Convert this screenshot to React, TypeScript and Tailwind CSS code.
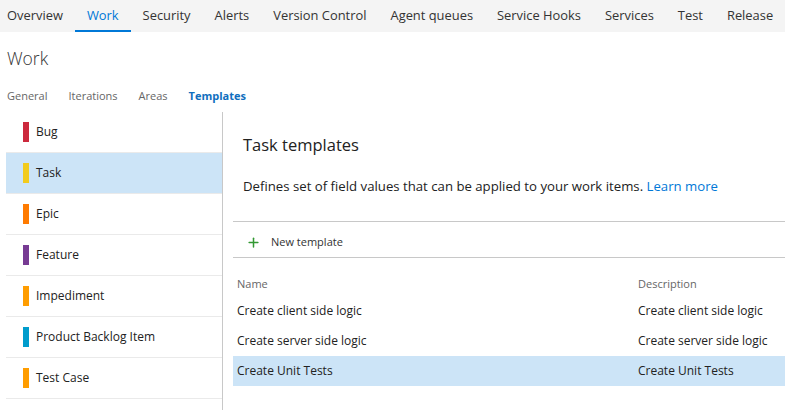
import { Plus } from "lucide-react"

const tabs = [
  "Overview",
  "Work",
  "Security",
  "Alerts",
  "Version Control",
  "Agent queues",
  "Service Hooks",
  "Services",
  "Test",
  "Release",
]

const subTabs = ["General", "Iterations", "Areas", "Templates"]

const workItemTypes = [
  { name: "Bug", color: "bg-[#cc293d]" },
  { name: "Task", color: "bg-[#f2cb1d]", selected: true },
  { name: "Epic", color: "bg-[#ff7b00]" },
  { name: "Feature", color: "bg-[#773b93]" },
  { name: "Impediment", color: "bg-[#ff9d00]" },
  { name: "Product Backlog Item", color: "bg-[#009ccc]" },
  { name: "Test Case", color: "bg-[#ff9d00]" },
]

const templates = [
  { name: "Create client side logic", description: "Create client side logic" },
  { name: "Create server side logic", description: "Create server side logic" },
  { name: "Create Unit Tests", description: "Create Unit Tests", selected: true },
]

export default function App() {
  return (
    <div className="h-[410px] w-[785px] overflow-hidden bg-white font-['Open_Sans',sans-serif] text-[#222]">
      {/* Top navigation */}
      <nav className="flex h-8 overflow-hidden bg-[#f4f4f4] text-[12.9px]">
        {tabs.map((tab, i) => (
          <div
            key={tab}
            className={`flex h-full shrink-0 items-center whitespace-nowrap ${i === 0 ? "pl-[7px] pr-3" : "px-3"} ${
              tab === "Work"
                ? "border-b-2 border-[#0078d7] pt-[2px] text-[#0078d7]"
                : "text-[#333]"
            }`}
          >
            {tab}
          </div>
        ))}
      </nav>

      {/* Page title */}
      <h1 className="mt-[14px] pl-[7px] text-[17.5px] font-light leading-6 text-[#333]">Work</h1>

      {/* Sub tabs */}
      <div className="mt-[18px] flex gap-[21px] pl-[7px] text-[11px] leading-4">
        {subTabs.map((tab) => (
          <span
            key={tab}
            className={tab === "Templates" ? "font-bold text-[#106ebe]" : "text-[#666]"}
          >
            {tab}
          </span>
        ))}
      </div>

      <div className="mt-2 flex h-[298px]">
        {/* Work item types */}
        <div className="w-[223px] shrink-0 border-r border-[#c8c8c8] pl-[6px]">
          {workItemTypes.map((item) => (
            <div
              key={item.name}
              className={`flex h-[41px] items-center gap-[7px] border-b border-[#eaeaea] pl-[17px] text-[12px] ${
                item.selected ? "bg-[#cce4f7]" : ""
              }`}
            >
              <span className={`h-5 w-[6px] ${item.color}`} />
              <span>{item.name}</span>
            </div>
          ))}
        </div>

        {/* Templates panel */}
        <div className="flex-1 pl-[10px]">
          <div className="pl-[10px]">
            <h2 className="pt-[21px] text-[16.5px] leading-6 text-[#222]">Task templates</h2>
            <p className="mt-5 whitespace-nowrap text-[13.2px] leading-[18px] text-[#222]">
              Defines set of field values that can be applied to your work items.{" "}
              <span className="text-[#0078d7]">Learn more</span>
            </p>
          </div>

          <div className="mt-[26px] flex h-[37px] items-center gap-[10px] border-y border-[#c8c8c8] pl-[13px] pt-[5px] text-[11px] text-[#333]">
            <Plus className="h-[15px] w-[15px] text-[#339933]" strokeWidth={2.4} />
            <span>New template</span>
          </div>

          <div className="mt-4 grid grid-cols-[401px_1fr] pl-1 text-[11px] leading-5 text-[#666]">
            <span>Name</span>
            <span>Description</span>
          </div>

          <div className="mt-[2px]">
            {templates.map((t) => (
              <div
                key={t.name}
                className={`grid h-[30px] grid-cols-[401px_1fr] items-center pl-1 text-[12px] text-[#222] ${
                  t.selected ? "bg-[#cce4f7]" : ""
                }`}
              >
                <span>{t.name}</span>
                <span className="whitespace-nowrap">{t.description}</span>
              </div>
            ))}
          </div>
        </div>
      </div>
    </div>
  )
}
